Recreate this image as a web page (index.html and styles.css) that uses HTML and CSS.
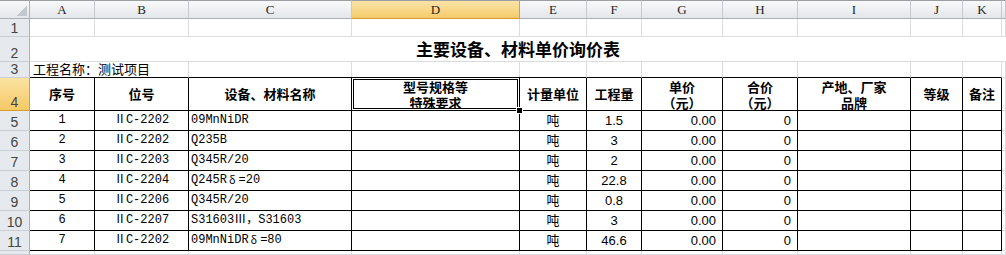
FILE: index.html
```html
<!DOCTYPE html>
<html lang="zh-CN">
<head>
<meta charset="utf-8">
<title>主要设备、材料单价询价表</title>
<link rel="stylesheet" href="styles.css">
</head>
<body>
<div class="sheet">
  <!-- column headers -->
  <div class="corner"><span class="tri"></span></div>
  <div class="ch">A</div>
  <div class="ch">B</div>
  <div class="ch">C</div>
  <div class="ch sel">D</div>
  <div class="ch">E</div>
  <div class="ch">F</div>
  <div class="ch">G</div>
  <div class="ch">H</div>
  <div class="ch">I</div>
  <div class="ch">J</div>
  <div class="ch">K</div>
  <div class="ch"></div>

  <!-- row 1 -->
  <div class="rh">1</div>
  <div class="c"></div><div class="c"></div><div class="c"></div><div class="c"></div><div class="c"></div><div class="c"></div><div class="c"></div><div class="c"></div><div class="c"></div><div class="c"></div><div class="c"></div><div class="c"></div>

  <!-- row 2 -->
  <div class="rh">2</div>
  <div class="title">主要设备、材料单价询价表</div>

  <!-- row 3 -->
  <div class="rh">3</div>
  <div class="c tb project">工程名称：测试项目</div>
  <div class="c tb"></div><div class="c tb"></div><div class="c tb"></div><div class="c tb"></div><div class="c tb"></div><div class="c tb"></div><div class="c tb"></div><div class="c tb"></div><div class="c tb"></div>
  <div class="c"></div>

  <!-- row 4 -->
  <div class="rh sel">4</div>
  <div class="t hd">序号</div>
  <div class="t hd">位号</div>
  <div class="t hd">设备、材料名称</div>
  <div class="t hd active"><span class="two">型号规格等<br>特殊要求</span></div>
  <div class="t hd">计量单位</div>
  <div class="t hd">工程量</div>
  <div class="t hd"><span class="two">单价<br>（元）</span></div>
  <div class="t hd"><span class="two">合价<br>（元）</span></div>
  <div class="t hd"><span class="two">产地、厂家<br>品牌</span></div>
  <div class="t hd">等级</div>
  <div class="t hd">备注</div>
  <div class="c"></div>

  <!-- row 5 -->
  <div class="rh">5</div>
  <div class="t ctr lat">1</div>
  <div class="t ctr lat">ⅡC-2202</div>
  <div class="t lft lat">09MnNiDR</div>
  <div class="t"></div>
  <div class="t ctr unit">吨</div>
  <div class="t ctr num">1.5</div>
  <div class="t rgt num">0.00</div>
  <div class="t rgt num">0</div>
  <div class="t"></div><div class="t"></div><div class="t"></div>
  <div class="c"></div>

  <!-- row 6 -->
  <div class="rh">6</div>
  <div class="t ctr lat">2</div>
  <div class="t ctr lat">ⅡC-2202</div>
  <div class="t lft lat">Q235B</div>
  <div class="t"></div>
  <div class="t ctr unit">吨</div>
  <div class="t ctr num">3</div>
  <div class="t rgt num">0.00</div>
  <div class="t rgt num">0</div>
  <div class="t"></div><div class="t"></div><div class="t"></div>
  <div class="c"></div>

  <!-- row 7 -->
  <div class="rh">7</div>
  <div class="t ctr lat">3</div>
  <div class="t ctr lat">ⅡC-2203</div>
  <div class="t lft lat">Q345R/20</div>
  <div class="t"></div>
  <div class="t ctr unit">吨</div>
  <div class="t ctr num">2</div>
  <div class="t rgt num">0.00</div>
  <div class="t rgt num">0</div>
  <div class="t"></div><div class="t"></div><div class="t"></div>
  <div class="c"></div>

  <!-- row 8 -->
  <div class="rh">8</div>
  <div class="t ctr lat">4</div>
  <div class="t ctr lat">ⅡC-2204</div>
  <div class="t lft lat">Q245R<span class="gk">δ</span>=20</div>
  <div class="t"></div>
  <div class="t ctr unit">吨</div>
  <div class="t ctr num">22.8</div>
  <div class="t rgt num">0.00</div>
  <div class="t rgt num">0</div>
  <div class="t"></div><div class="t"></div><div class="t"></div>
  <div class="c"></div>

  <!-- row 9 -->
  <div class="rh">9</div>
  <div class="t ctr lat">5</div>
  <div class="t ctr lat">ⅡC-2206</div>
  <div class="t lft lat">Q345R/20</div>
  <div class="t"></div>
  <div class="t ctr unit">吨</div>
  <div class="t ctr num">0.8</div>
  <div class="t rgt num">0.00</div>
  <div class="t rgt num">0</div>
  <div class="t"></div><div class="t"></div><div class="t"></div>
  <div class="c"></div>

  <!-- row 10 -->
  <div class="rh">10</div>
  <div class="t ctr lat">6</div>
  <div class="t ctr lat">ⅡC-2207</div>
  <div class="t lft lat">S31603Ⅲ，S31603</div>
  <div class="t"></div>
  <div class="t ctr unit">吨</div>
  <div class="t ctr num">3</div>
  <div class="t rgt num">0.00</div>
  <div class="t rgt num">0</div>
  <div class="t"></div><div class="t"></div><div class="t"></div>
  <div class="c"></div>

  <!-- row 11 -->
  <div class="rh">11</div>
  <div class="t ctr lat">7</div>
  <div class="t ctr lat">ⅡC-2202</div>
  <div class="t lft lat">09MnNiDR<span class="gk">δ</span>=80</div>
  <div class="t"></div>
  <div class="t ctr unit">吨</div>
  <div class="t ctr num">46.6</div>
  <div class="t rgt num">0.00</div>
  <div class="t rgt num">0</div>
  <div class="t"></div><div class="t"></div><div class="t"></div>
  <div class="c"></div>

  <!-- row 12 (partially visible) -->
  <div class="rh"></div>
  <div class="c"></div><div class="c"></div><div class="c"></div><div class="c"></div><div class="c"></div><div class="c"></div><div class="c"></div><div class="c"></div><div class="c"></div><div class="c"></div><div class="c"></div><div class="c"></div>
</div>
</body>
</html>
```

FILE: styles.css
```css
html, body {
  margin: 0;
  padding: 0;
  background: #ffffff;
  overflow: hidden;
}

.sheet {
  display: grid;
  grid-template-columns: 30px 65px 94px 163px 168px 67px 55px 81px 75px 113px 52px 39px 1fr;
  grid-template-rows: 19px 18px 25px 16px 33px repeat(7, 20px) 4px;
  width: 1006px;
  height: 255px;
  overflow: hidden;
  font-family: "Noto Sans CJK SC", sans-serif;
  font-size: 13px;
  line-height: 15px;
  color: #000;
}

.sheet > div {
  box-sizing: border-box;
  display: flex;
  align-items: center;
  min-width: 0;
  overflow: hidden;
  white-space: nowrap;
}

/* ---------- headers ---------- */
.corner {
  background: linear-gradient(#f7f8f9, #e4e7eb);
  border-top: 1px solid #9a9ea3;
  border-right: 1px solid #a9b0b8;
  border-bottom: 1px solid #a9b0b8;
  justify-content: flex-end;
  align-items: flex-end !important;
  padding: 0 2px 2px 0;
}
.tri {
  display: block;
  width: 10px;
  height: 10px;
  background: linear-gradient(135deg, transparent 50%, #c3c8ce 50%);
}

.ch {
  background: linear-gradient(#f8f9fa, #e3e6ea);
  border-top: 1px solid #9a9ea3;
  border-right: 1px solid #c5cad0;
  border-bottom: 1px solid #a9b0b8;
  justify-content: center;
  font-family: "Liberation Serif", serif;
  font-size: 13px;
  color: #262626;
}
.ch.sel {
  background: linear-gradient(#fbe4a8, #f5cb6a);
  border-right-color: #c9a25a;
  border-bottom-color: #d69c2c;
}

.rh {
  background: #e6e9ed;
  border-right: 1px solid #a9b0b8;
  border-bottom: 1px solid #c9ced4;
  justify-content: center;
  align-items: flex-end !important;
  padding-bottom: 1px;
  font-family: "Liberation Sans", sans-serif;
  font-size: 14px;
  line-height: 14px;
  color: #444;
}
.rh.sel {
  background: linear-gradient(#fbe3a4, #f5c965);
  border-right-color: #c9a25a;
  border-bottom-color: #d69c2c;
}

/* ---------- plain cells ---------- */
.c {
  border-right: 1px solid #dadcdf;
  border-bottom: 1px solid #dadcdf;
}
.c.tb {
  border-bottom-color: #000;
}
.project {
  grid-column: span 2;
  align-items: flex-end !important;
  padding: 0 0 1px 3px;
  overflow: visible !important;
}

.title {
  grid-column: span 12;
  justify-content: center;
  border-bottom: 1px solid #dadcdf;
  font-size: 17px;
  font-weight: 700;
  line-height: 20px;
}

/* ---------- bordered table ---------- */
.t {
  border-right: 1px solid #000;
  border-bottom: 1px solid #000;
  padding: 0 2px;
  overflow: visible !important;
}
.hd {
  justify-content: center;
  text-align: center;
  font-weight: 700;
  font-size: 13px;
  line-height: 16px;
}
.two {
  display: block;
  line-height: 16px;
  padding-top: 1px;
}
.active {
  position: relative;
  z-index: 2;
}
.active::before {
  content: "";
  position: absolute;
  left: -1px;
  top: -1px;
  right: -1px;
  bottom: -1px;
  box-sizing: border-box;
  border: 1px solid #000;
  box-shadow: inset 0 0 0 1px #fff, inset 0 0 0 2px #000;
}
.active::after {
  content: "";
  position: absolute;
  right: -4px;
  bottom: -4px;
  width: 5px;
  height: 5px;
  background: #000;
  border: 1px solid #fff;
}

.ctr { justify-content: center; }
.lft { justify-content: flex-start; }
.rgt { justify-content: flex-end; padding-right: 6px; }

.unit {
  padding-bottom: 3px;
}

.lat {
  font-family: "Liberation Mono", "Noto Sans CJK SC", monospace;
  font-size: 12px;
}
.num {
  font-family: "Liberation Sans", sans-serif;
  font-size: 13px;
}
.gk {
  font-family: "Noto Sans CJK SC", sans-serif;
  font-size: 11px;
  line-height: 12px;
  padding: 0 3px 4px 2px;
}
```
